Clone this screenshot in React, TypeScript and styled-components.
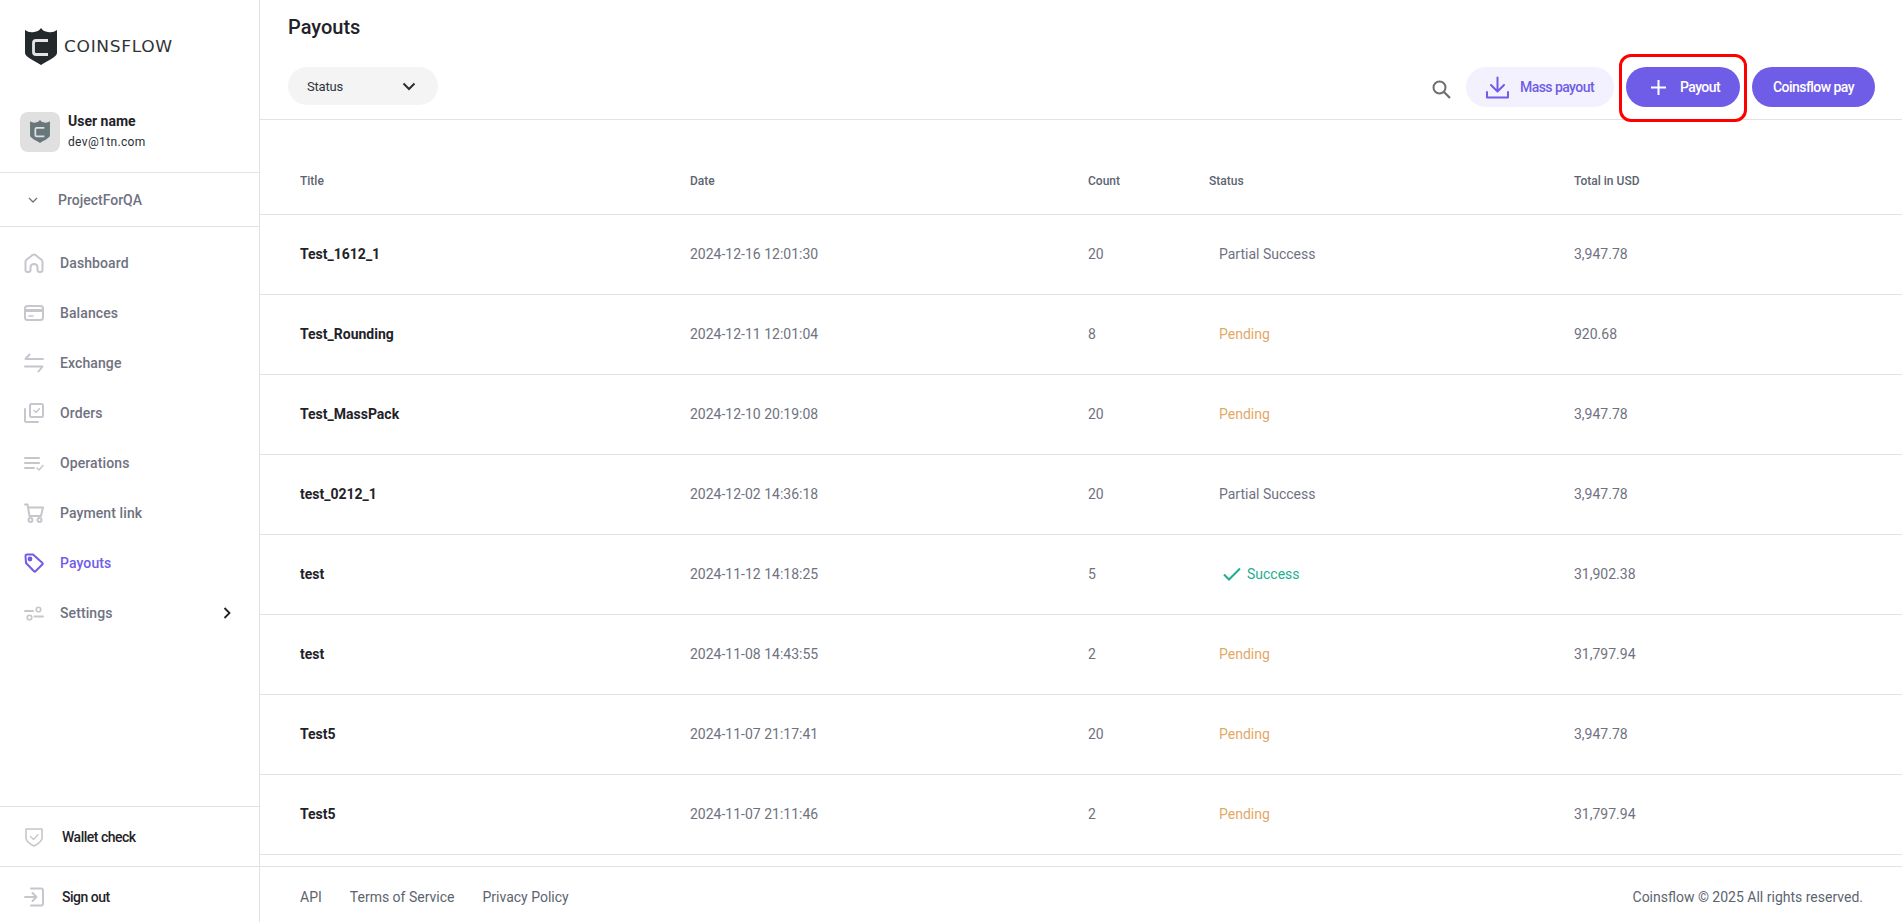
import React from "react";
import styled, { createGlobalStyle } from "styled-components";

const Global = createGlobalStyle`
  html, body { margin: 0; padding: 0; background: #fff; height: 100%; overflow: hidden; }
  body { font-family: Roboto, "Liberation Sans", sans-serif; color: #1f2328; }
  * { box-sizing: border-box; }
`;

const Page = styled.div`
  display: grid;
  grid-template-columns: 260px 1fr;
  height: 922px;
  width: 1902px;
`;

const Sidebar = styled.aside`
  display: flex;
  flex-direction: column;
  border-right: 1px solid #e2e2e4;
  height: 922px;
  overflow: hidden;
`;

const LogoBar = styled.div`
  height: 112px;
  padding: 28px 0 0 25px;
  display: flex;
  align-items: flex-start;
  gap: 7px;
  flex: none;
`;

const LogoText = styled.span`
  font-family: "DejaVu Sans", sans-serif;
  font-size: 15.5px;
  line-height: 1;
  letter-spacing: 0.6px;
  margin-top: 12px;
  color: #2f3336;
  font-weight: 400;
  transform: scaleX(1.1);
  transform-origin: left center;
`;

const UserRow = styled.div`
  display: flex;
  align-items: center;
  gap: 8px;
  padding: 0 20px 21px;
  height: 61px;
  border-bottom: 1px solid #e2e2e4;
  flex: none;
`;

const Avatar = styled.div`
  width: 40px;
  height: 40px;
  border-radius: 8px;
  background: #e0e0e0;
  display: flex;
  align-items: center;
  justify-content: center;
  flex: none;
`;

const UserInfo = styled.div`
  display: flex;
  flex-direction: column;
  gap: 5px;
`;

const UserName = styled.div`
  font-size: 14px;
  line-height: 16px;
  font-weight: 700;
  color: #1f2328;
`;

const UserMail = styled.div`
  font-size: 12px;
  line-height: 16px;
  color: #2a2e33;
  letter-spacing: 0.35px;
`;

const ProjectRow = styled.div`
  height: 54px;
  display: flex;
  align-items: center;
  padding-left: 28px;
  gap: 20px;
  border-bottom: 1px solid #e2e2e4;
  font-size: 14px;
  font-weight: 500;
  color: #6f7280;
  flex: none;
`;

const Nav = styled.nav`
  padding-top: 11px;
  display: flex;
  flex-direction: column;
  height: 579px;
  flex: none;
`;

const NavItem = styled.div<{ $active?: boolean }>`
  height: 50px;
  flex: none;
  display: flex;
  align-items: center;
  padding: 0 28px 0 24px;
  gap: 16px;
  font-size: 14px;
  font-weight: 500;
  letter-spacing: 0.1px;
  color: ${(p) => (p.$active ? "#6f5de7" : "#6f7280")};
`;

const NavLabel = styled.span`
  flex: 1;
`;

const FootItem = styled.div`
  height: 60px;
  flex: none;
  display: flex;
  align-items: center;
  padding: 0 24px;
  gap: 18px;
  font-size: 14px;
  font-weight: 500;
  letter-spacing: -0.5px;
  color: #1f2328;
  border-top: 1px solid #e2e2e4;
`;

const Main = styled.main`
  display: flex;
  flex-direction: column;
  height: 922px;
  min-width: 0;
`;

const Head = styled.header`
  height: 120px;
  padding: 15px 27px 0 28px;
  border-bottom: 1px solid #e2e2e4;
  display: flex;
  flex-direction: column;
  flex: none;
`;

const Title = styled.h1`
  margin: 0;
  font-size: 20px;
  line-height: 24px;
  font-weight: 500;
  color: #1f2328;
`;

const Tools = styled.div`
  display: flex;
  align-items: center;
  margin-top: 28px;
`;

const Select = styled.div`
  width: 150px;
  height: 38px;
  align-self: flex-start;
  border-radius: 19px;
  background: #f4f4f4;
  display: flex;
  align-items: center;
  justify-content: space-between;
  padding: 0 22px 0 19px;
  font-size: 13px;
  color: #2f3540;
  letter-spacing: -0.2px;
`;

const Spacer = styled.div`
  flex: 1;
`;

const SearchBtn = styled.div`
  display: flex;
  margin-right: 3px;
  margin-top: 4px;
`;

const Pill = styled.div<{ $soft?: boolean; $w: number; $pad?: number }>`
  position: relative;
  height: 40px;
  width: ${(p) => p.$w}px;
  padding-left: ${(p) => p.$pad || 0}px;
  border-radius: 20px;
  display: flex;
  align-items: center;
  justify-content: center;
  font-size: 14px;
  font-weight: 500;
  letter-spacing: -0.55px;
  background: ${(p) => (p.$soft ? "#f3f1fd" : "#6f5de7")};
  color: ${(p) => (p.$soft ? "#6f5de7" : "#fff")};
  margin-left: 12px;
`;

const PillIcon = styled.span<{ $gap: number }>`
  display: flex;
  margin-right: ${(p) => p.$gap}px;
`;

const Highlight = styled.div`
  position: absolute;
  left: -7px;
  right: -7px;
  top: -13px;
  bottom: -15px;
  border: 3px solid #f00;
  border-radius: 12px;
  pointer-events: none;
`;

const TableWrap = styled.div`
  flex: 1;
  overflow: hidden;
`;

const Grid = "grid-template-columns: 390px 398px 121px 365px 1fr; padding-left: 40px;";

const HeadRow = styled.div`
  display: grid;
  ${Grid}
  height: 95px;
  padding-top: 51px;
  font-size: 12px;
  line-height: 20px;
  font-weight: 500;
  color: #5c6470;
  border-bottom: 1px solid #e2e2e4;
`;

const Row = styled.div`
  display: grid;
  ${Grid}
  height: 80px;
  padding-bottom: 2px;
  align-items: center;
  font-size: 14px;
  color: #6f7280;
  border-bottom: 1px solid #e2e2e4;
`;

const NameCell = styled.div`
  font-weight: 700;
  color: #1f2328;
`;

const StatusCell = styled.div<{ $c: string }>`
  color: ${(p) => p.$c};
  padding-left: 10px;
  display: flex;
  align-items: center;
  gap: 6px;
`;

const CheckMark = styled.svg`
  margin-left: 4px;
  flex: none;
`;

const Footer = styled.footer`
  height: 56px;
  border-top: 1px solid #e2e2e4;
  display: flex;
  align-items: center;
  padding: 4px 39px 0 40px;
  gap: 28px;
  font-size: 14px;
  color: #5c6470;
  flex: none;
`;

const Copy = styled.span`
  margin-left: auto;
`;

const Stroke = { fill: "none", stroke: "#c6c6cc", strokeWidth: 2, strokeLinecap: "round" as const, strokeLinejoin: "round" as const };

const Shield = ({ w, h, fill, c }: { w: number; h: number; fill: string; c: string }) => (
  <svg width={w} height={h} viewBox="0 0 32 37">
    <path d="M0 2 Q4 5 9 4 Q14 3.5 16 0 Q18 3.5 23 4 Q28 5 32 2 V25 C32 29 22 33 16 37 C10 33 0 29 0 25 Z" fill={fill} />
    <path d="M23 12.5 H11 Q8.5 12.5 8.5 15 V24 Q8.5 26.5 11 26.5 H23" fill="none" stroke={c} strokeWidth="2.8" />
  </svg>
);

const IconBox = styled.svg`
  flex: none;
`;

const Ico = ({ children, color }: { children: React.ReactNode; color?: string }) => (
  <IconBox width="20" height="20" viewBox="0 0 20 20" {...Stroke} stroke={color || Stroke.stroke}>
    {children}
  </IconBox>
);

const Home = () => (
  <Ico><path d="M1.5 17 V8.5 Q1.5 7.5 2.5 6.7 L8.5 2 Q10 1 11.5 2 L17.5 6.7 Q18.5 7.5 18.5 8.5 V17 Q18.5 19 16.5 19 H15.5 Q13.5 19 13.5 17 V14.5 Q13.5 11 10 11 Q6.5 11 6.5 14.5 V17 Q6.5 19 4.5 19 H3.5 Q1.5 19 1.5 17 Z" /></Ico>
);
const Card = () => (
  <Ico><rect x="1" y="3" width="18" height="14" rx="2.5" /><path d="M1 7.5 H19" strokeWidth="3" /><path d="M5 13 H9" strokeWidth="1.6" /></Ico>
);
const Swap = () => (
  <Ico><path d="M5.5 1.5 L1.5 6 H19" /><path d="M14.5 18.5 L18.5 13.5 H1" /></Ico>
);
const Orders = () => (
  <Ico><rect x="6" y="1" width="13" height="13" rx="1.5" /><path d="M10 7.5 L12 9.5 L15.5 5.5" strokeWidth="1.4" /><path d="M1 6 V17.5 Q1 19 2.5 19 H14" /></Ico>
);
const Ops = () => (
  <Ico><path d="M1 5 H15 M1 10 H15 M1 15 H10" /><path d="M13 15 L15 17 L19 12.5" strokeWidth="1.5" /></Ico>
);
const Cart = () => (
  <Ico><path d="M1 1.5 H3.5 L5.5 13 H17 L19 4.5 H4" /><circle cx="6.5" cy="17" r="2" /><circle cx="15.5" cy="17" r="2" /></Ico>
);
const Tag = () => (
  <Ico color="#6f5de7"><path d="M1.5 3 Q1.5 1.5 3 1.5 H9 L18.5 10 Q19 10.7 18.5 11.3 L11.5 18.3 Q10.8 19 10 18.3 L2 10 Z" /><circle cx="6" cy="6" r="1.4" fill="#6f5de7" /></Ico>
);
const Sliders = () => (
  <Ico><path d="M1 8 H9" /><circle cx="14.5" cy="6.5" r="2.3" strokeWidth="1.6" /><path d="M10.5 13.5 H19" /><circle cx="5.5" cy="14.5" r="2.3" strokeWidth="1.6" /></Ico>
);
const WalletIcon = () => (
  <Ico><path d="M2 2 H18 V11 Q18 15 10 19 Q2 15 2 11 Z" strokeWidth="1.6" /><path d="M6.5 9.5 L9.5 12.5 L14 7.5" strokeWidth="1.2" /></Ico>
);
const Out = () => (
  <Ico><path d="M1 10 H12 M8.5 6 L12.5 10 L8.5 14" /><path d="M7 1.5 H17 Q19 1.5 19 3.5 V16.5 Q19 18.5 17 18.5 H7" /></Ico>
);

const items: [string, React.ReactNode][] = [
  ["Dashboard", <Home />],
  ["Balances", <Card />],
  ["Exchange", <Swap />],
  ["Orders", <Orders />],
  ["Operations", <Ops />],
  ["Payment link", <Cart />],
];

const rows: [string, string, string, string, string][] = [
  ["Test_1612_1", "2024-12-16 12:01:30", "20", "Partial Success", "3,947.78"],
  ["Test_Rounding", "2024-12-11 12:01:04", "8", "Pending", "920.68"],
  ["Test_MassPack", "2024-12-10 20:19:08", "20", "Pending", "3,947.78"],
  ["test_0212_1", "2024-12-02 14:36:18", "20", "Partial Success", "3,947.78"],
  ["test", "2024-11-12 14:18:25", "5", "Success", "31,902.38"],
  ["test", "2024-11-08 14:43:55", "2", "Pending", "31,797.94"],
  ["Test5", "2024-11-07 21:17:41", "20", "Pending", "3,947.78"],
  ["Test5", "2024-11-07 21:11:46", "2", "Pending", "31,797.94"],
];

const statusColor: Record<string, string> = {
  "Partial Success": "#6f7280",
  Pending: "#dfaa66",
  Success: "#1fae8e",
};

export default function App() {
  return (
    <Page>
      <Global />
      <Sidebar>
        <LogoBar>
          <Shield w={32} h={37} fill="#24292c" c="#e4e4e4" />
          <LogoText>COINSFLOW</LogoText>
        </LogoBar>
        <UserRow>
          <Avatar><Shield w={20} h={23} fill="#67777c" c="#e0e0e0" /></Avatar>
          <UserInfo>
            <UserName>User name</UserName>
            <UserMail>dev@1tn.com</UserMail>
          </UserInfo>
        </UserRow>
        <ProjectRow>
          <svg width="10" height="6" viewBox="0 0 10 6" fill="none" stroke="#6f7280" strokeWidth="1.3"><path d="M1 1 L5 5 L9 1" /></svg>
          ProjectForQA
        </ProjectRow>
        <Nav>
          {items.map(([label, icon]) => (
            <NavItem key={label}>{icon}<NavLabel>{label}</NavLabel></NavItem>
          ))}
          <NavItem $active><Tag /><NavLabel>Payouts</NavLabel></NavItem>
          <NavItem>
            <Sliders /><NavLabel>Settings</NavLabel>
            <svg width="8" height="12" viewBox="0 0 8 12" fill="none" stroke="#1f2328" strokeWidth="1.8"><path d="M1.5 1 L6.5 6 L1.5 11" /></svg>
          </NavItem>
        </Nav>
        <FootItem><WalletIcon />Wallet check</FootItem>
        <FootItem><Out />Sign out</FootItem>
      </Sidebar>
      <Main>
        <Head>
          <Title>Payouts</Title>
          <Tools>
            <Select>
              Status
              <svg width="14" height="9" viewBox="0 0 14 9" fill="none" stroke="#2a2e33" strokeWidth="2"><path d="M1.5 1.5 L7 7 L12.5 1.5" /></svg>
            </Select>
            <Spacer />
            <SearchBtn>
              <svg width="19" height="19" viewBox="0 0 19 19" fill="none" stroke="#6e6e6e" strokeWidth="2"><circle cx="7.5" cy="7.5" r="6" /><path d="M12 12 L18 18" strokeWidth="2.2" /></svg>
            </SearchBtn>
            <Pill $soft $w={148}>
              <PillIcon $gap={11}>
                <svg width="23" height="23" viewBox="0 0 23 23" fill="none" stroke="#6f5de7" strokeWidth="2" strokeLinecap="round" strokeLinejoin="round"><path d="M11.5 1.5 V15 M5 9 L11.5 15.5 L18 9" /><path d="M1 16 V21.5 H22 V16" /></svg>
              </PillIcon>
              Mass payout
            </Pill>
            <Pill $w={114} $pad={5}>
              <PillIcon $gap={14}>
                <svg width="15" height="15" viewBox="0 0 15 15" fill="none" stroke="#fff" strokeWidth="2"><path d="M7.5 0 V15 M0 7.5 H15" /></svg>
              </PillIcon>
              Payout
              <Highlight />
            </Pill>
            <Pill $w={123}>Coinsflow pay</Pill>
          </Tools>
        </Head>
        <TableWrap>
          <HeadRow>
            <span>Title</span><span>Date</span><span>Count</span><span>Status</span><span>Total in USD</span>
          </HeadRow>
          {rows.map((r, i) => (
            <Row key={i}>
              <NameCell>{r[0]}</NameCell>
              <span>{r[1]}</span>
              <span>{r[2]}</span>
              <StatusCell $c={statusColor[r[3]]}>
                {r[3] === "Success" && (
                  <CheckMark width="18" height="14" viewBox="0 0 18 14" fill="none" stroke="#1fae8e" strokeWidth="2"><path d="M1 7.5 L6 12.5 L17 1.5" /></CheckMark>
                )}
                {r[3]}
              </StatusCell>
              <span>{r[4]}</span>
            </Row>
          ))}
        </TableWrap>
        <Footer>
          <span>API</span>
          <span>Terms of Service</span>
          <span>Privacy Policy</span>
          <Copy>Coinsflow © 2025 All rights reserved.</Copy>
        </Footer>
      </Main>
    </Page>
  );
}
